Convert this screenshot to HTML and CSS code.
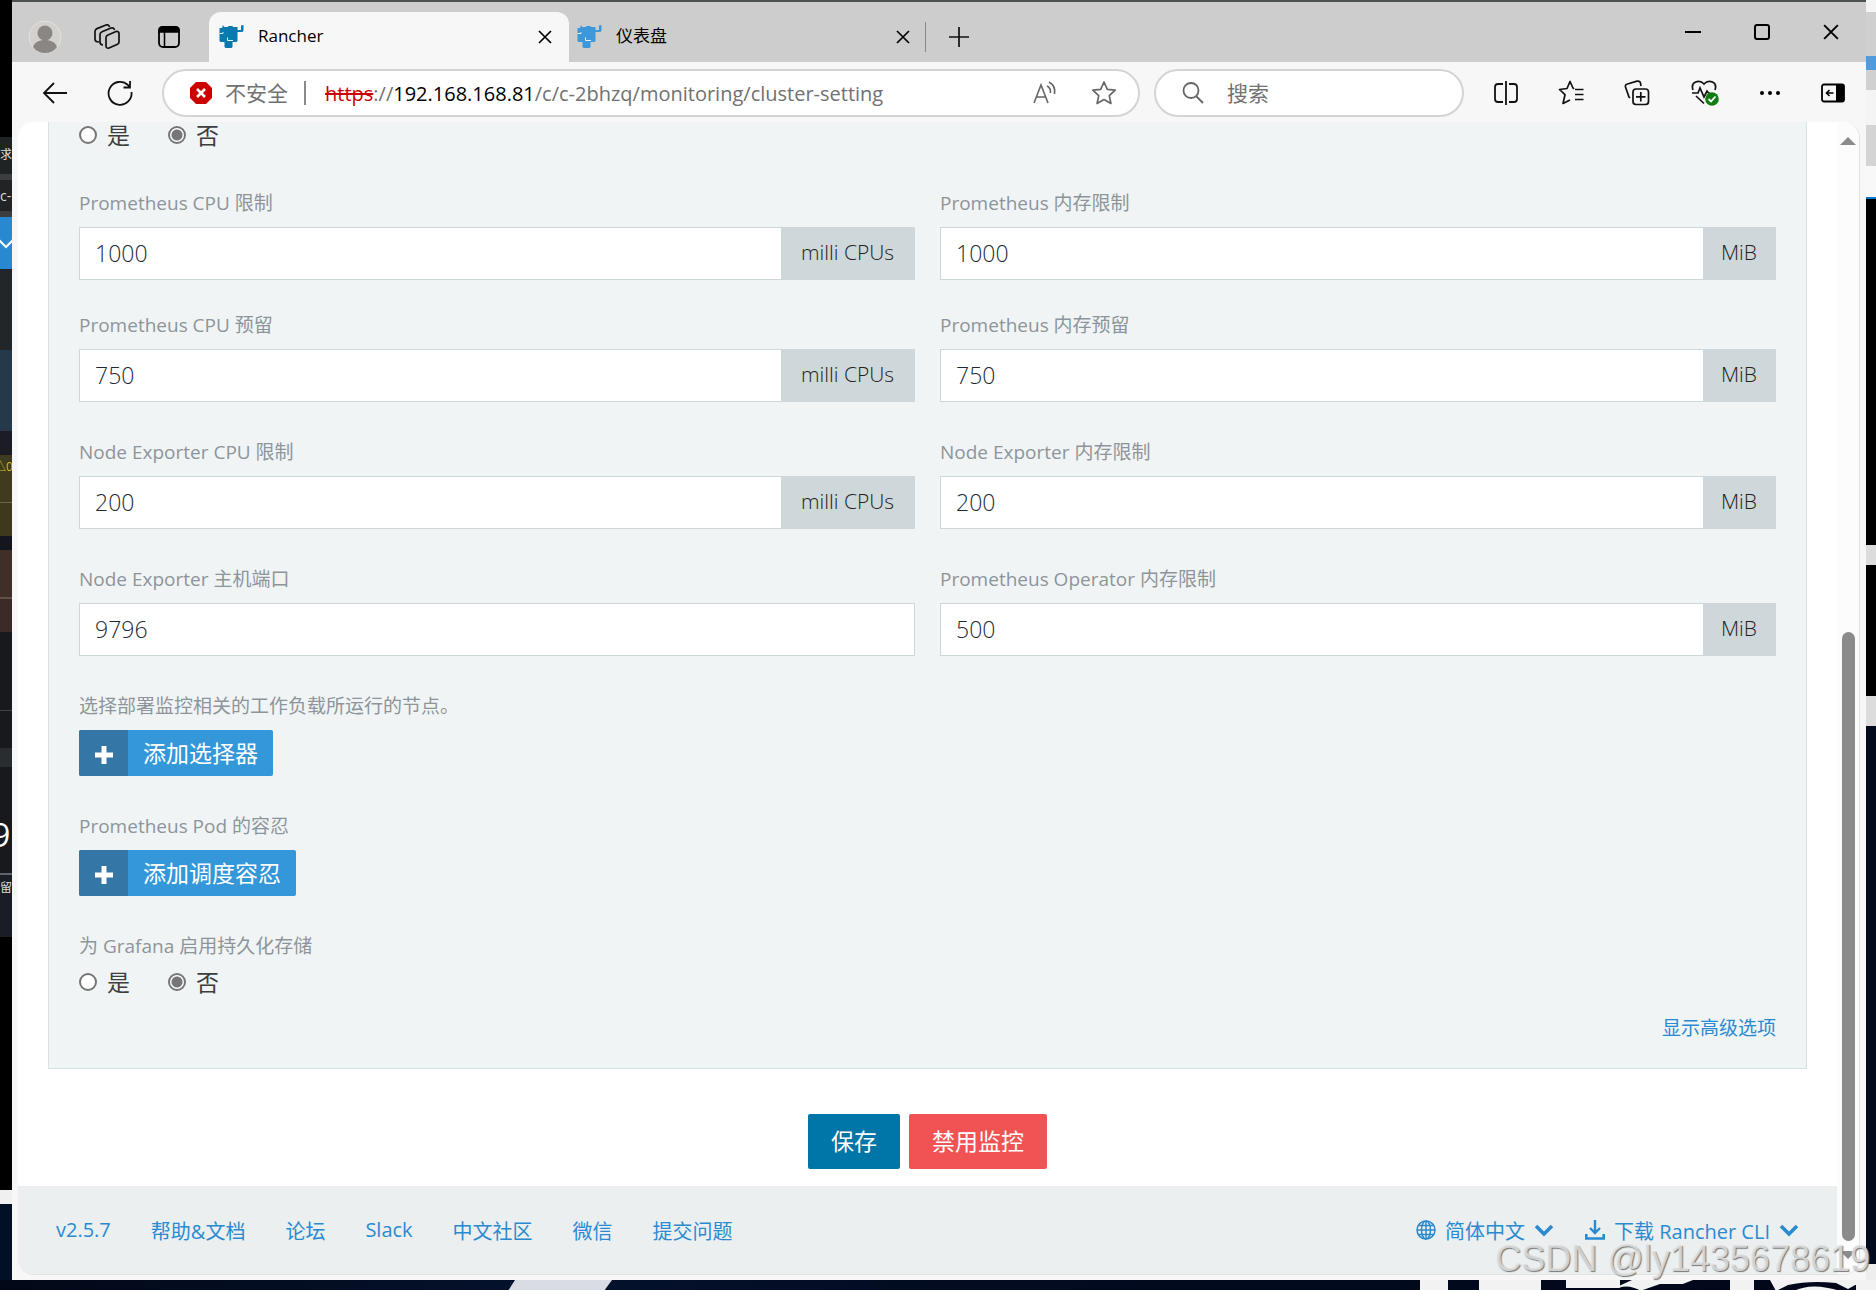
FILE: index.html
```html
<!DOCTYPE html>
<html lang="zh-CN">
<head>
<meta charset="utf-8">
<title>Rancher</title>
<link rel="stylesheet" href="styles.css">
</head>
<body>
<svg class="defs" aria-hidden="true">
  <symbol id="bull" viewBox="0 0 24 24">
    <path fill="currentColor" d="M0 3h2.500L3.500 0l1 2h4L9 1h4l.5 1H18v3h3.500V.5L24 0v5.500L23 7h-5v9l-1 1h-4v5l-1 1H6l-1-1v-5H1l-1-1z"/>
    <path d="M0 8.500h3.500V7M8 12.500v3h5.500" fill="none" stroke="#e8eef2" stroke-width="1"/>
  </symbol>
  <symbol id="close" viewBox="0 0 14 14"><path d="M1 1l12 12M13 1L1 13" fill="none" stroke="currentColor" stroke-width="1.700"/></symbol>
  <symbol id="chev" viewBox="0 0 20 14"><path d="M2 3l8 8 8-8" fill="none" stroke="currentColor" stroke-width="3.600"/></symbol>
  <symbol id="plus" viewBox="0 0 18 18"><path d="M0 9h18M9 0v18" fill="none" stroke="currentColor" stroke-width="5"/></symbol>
</svg>
<div class="desktop">
  <div class="strip-left" aria-hidden="true">
    <span class="l-text l-a">求特</span><span class="l-text l-b">c-</span>
    <svg class="l-chev" viewBox="0 0 12 14"><path d="M-1 3l7 7 7-7" fill="none" stroke="#fff" stroke-width="2"/></svg>
    <span class="l-text l-c">&#9651;0</span><span class="l-text l-d">9</span><span class="l-text l-e">留</span>
  </div>
  <div class="window">
    <header class="tabs">
      <div class="tab-tools">
        <button class="icon-btn" aria-label="个人资料"><svg width="34" height="34" viewBox="0 0 34 34"><circle cx="17" cy="17" r="16" fill="#d3d1ce" stroke="#e4e2df"/><circle cx="17" cy="13" r="7.500" fill="#8a8683"/><path d="M5 27c2-5 6-7 12-7s10 2 12 7c-3 4-7 6-12 6s-9-2-12-6z" fill="#8a8683"/></svg></button>
        <button class="icon-btn" aria-label="工作区"><svg width="26" height="26" viewBox="0 0 26 26" fill="none" stroke="#111" stroke-width="1.700"><path d="M14 11l8-3.500c1.500-.5 3 .5 3 2V18c0 1-.5 1.700-1.500 2.200L15 24c-1.500.7-3-.3-3-2v-8.500c0-1 .8-2 2-2.500zM9 21c-2 0-3-1-3-3V10.500c0-1.500.6-2.200 2-2.800L17 4c1.500-.5 3 0 3.500 2M5 18c-2.500 0-4-1-4-3V7.500C1 6 1.600 5.200 3 4.600L12 1c1.500-.5 3 0 3.500 2"/></svg></button>
        <button class="icon-btn" aria-label="标签页操作"><svg width="24" height="24" viewBox="0 0 24 24"><rect x="2" y="2" width="20" height="20" rx="4" fill="none" stroke="#000" stroke-width="1.800"/><path d="M2 7V5q0-3 3-3h14q3 0 3 3v2zM7.500 7v15" stroke="#000" stroke-width="1.500"/></svg></button>
      </div>
      <div class="tab tab-active">
        <svg class="fav" width="25" height="24"><use href="#bull"/></svg><span class="tab-title">Rancher</span>
        <button class="icon-btn" aria-label="关闭标签页"><svg width="14" height="14"><use href="#close"/></svg></button>
      </div>
      <div class="tab tab-idle">
        <svg class="fav fav-light" width="25" height="24"><use href="#bull"/></svg><span class="tab-title">仪表盘</span>
        <button class="icon-btn" aria-label="关闭标签页"><svg width="14" height="14"><use href="#close"/></svg></button>
      </div>
      <button class="icon-btn new-tab" aria-label="新建标签页"><svg width="22" height="22" viewBox="0 0 22 22"><path d="M1 11h20M11 1v20" stroke="#111" stroke-width="1.700"/></svg></button>
      <div class="win-controls">
        <button class="icon-btn" aria-label="最小化"><svg width="16" height="16" viewBox="0 0 16 16"><path d="M0 8h16" stroke="#000" stroke-width="2"/></svg></button>
        <button class="icon-btn" aria-label="最大化"><svg width="16" height="16" viewBox="0 0 16 16"><rect x="1" y="1" width="14" height="14" rx="2" fill="none" stroke="#000" stroke-width="2"/></svg></button>
        <button class="icon-btn" aria-label="关闭"><svg width="16" height="16"><use href="#close"/></svg></button>
      </div>
    </header>
    <nav class="toolbar">
      <div class="nav-buttons">
        <button class="icon-btn" aria-label="返回"><svg width="26" height="24" viewBox="0 0 26 24" fill="none" stroke="#111" stroke-width="1.800"><path d="M25 12H2M12 2L2 12l10 10"/></svg></button>
        <button class="icon-btn" aria-label="刷新"><svg width="26" height="26" viewBox="0 0 26 26" fill="none" stroke="#111" stroke-width="1.800"><path d="M24.500 12A11.500 11.500 0 1 1 21 5l2 2.500M23 1v6.500h-6.500"/></svg></button>
      </div>
      <div class="address">
        <svg width="24" height="24" viewBox="0 0 24 24"><path d="M7 1h10l6 6v10l-6 6H7l-6-6V7z" fill="#c00"/><path d="M8 8l8 8M16 8l-8 8" stroke="#fff" stroke-width="2.600"/></svg>
        <span class="unsafe">不安全</span>
        <span class="url"><s>https</s>://<b>192.168.168.81</b>/c/c-2bhzq/monitoring/cluster-setting</span>
        <button class="icon-btn" aria-label="朗读"><svg width="26" height="24" viewBox="0 0 26 24" fill="none" stroke="#666" stroke-width="1.600"><path d="M2 22L9 4l7 18M4.500 16h9M15 5q4 2 3.500 7M17 1q7 4 5.500 12"/></svg></button>
        <button class="icon-btn" aria-label="收藏"><svg width="26" height="26" viewBox="0 0 26 26" fill="none" stroke="#666" stroke-width="1.700" stroke-linejoin="round"><path d="M13 2l3.300 7.300 7.900.9-5.900 5.400 1.600 7.900-6.900-4-6.900 4 1.600-7.900L1.800 10.200l7.900-.9z"/></svg></button>
      </div>
      <div class="search">
        <svg width="24" height="24" viewBox="0 0 24 24" fill="none" stroke="#666" stroke-width="1.800"><circle cx="10" cy="9.500" r="7.500"/><path d="M15 15l7 7"/></svg>
        <input type="text" placeholder="搜索" aria-label="搜索">
      </div>
      <div class="actions">
        <button class="icon-btn" aria-label="分屏"><svg width="24" height="24" viewBox="0 0 24 24" fill="none" stroke="#111" stroke-width="1.800"><path d="M12 0v24M9 3H4q-3 0-3 3v12q0 3 3 3h5M15 3h5q3 0 3 3v12q0 3-3 3h-5"/></svg></button>
        <button class="icon-btn" aria-label="收藏夹"><svg width="26" height="26" viewBox="0 0 26 26" fill="none" stroke="#111" stroke-width="1.700" stroke-linejoin="round"><path d="M16 9l-1-1-3-6.500-3 7-7.500 1 5.500 5.200L5 23.500 12 20M17 9.500h8.500M17 14.500h8.500M17 19.500h8.500"/></svg></button>
        <button class="icon-btn" aria-label="集锦"><svg width="26" height="26" viewBox="0 0 26 26" fill="none" stroke="#111" stroke-width="1.700"><rect x="9" y="9" width="15.500" height="15.500" rx="3"/><path d="M16.800 12v9.500M12 16.800h9.500M6 18l-1-1-3.500-10Q1 4.500 3.500 4L13 1.200q3-.5 3.500 2L17 6"/></svg></button>
        <button class="icon-btn" aria-label="浏览器概要"><svg width="28" height="26" viewBox="0 0 28 26" fill="none" stroke="#111" stroke-width="1.700"><path d="M2 10Q0 4 4.500 2q5-2 8.500 2 3.500-4 8.500-2Q26 4 24 10M1 13h6l2-5 4 9 3-6 1.500 2H19M5 16l8 7.500"/><circle cx="21" cy="19" r="6.800" fill="#107c10" stroke="none"/><path d="M17.500 19l2.500 2.500 4.500-5" stroke="#fff" stroke-width="1.800"/></svg></button>
        <button class="icon-btn" aria-label="更多"><svg width="22" height="6" viewBox="0 0 22 6"><circle cx="3" cy="3" r="2"/><circle cx="11" cy="3" r="2"/><circle cx="19" cy="3" r="2"/></svg></button>
        <button class="icon-btn" aria-label="侧边栏"><svg width="24" height="20" viewBox="0 0 24 20"><rect x="1" y="1.500" width="22" height="17" rx="2" fill="none" stroke="#000" stroke-width="1.800"/><path d="M15 1h7q1 0 1 1v16q0 1-1 1h-7z"/><path d="M12.500 10H6M8.500 7L5.500 10l3 3" fill="none" stroke="#000" stroke-width="1.600"/></svg></button>
      </div>
    </nav>
    <div class="viewport">
      <div class="page">
        <main>
          <form class="panel">
            <div class="radios">
              <label><input type="radio" name="persist-prometheus">是</label>
              <label><input type="radio" name="persist-prometheus" checked>否</label>
            </div>
            <div class="fields tight">
              <div class="field"><label for="f1">Prometheus CPU 限制</label><div class="group"><input id="f1" type="text" value="1000"><span class="unit unit-wide">milli CPUs</span></div></div>
              <div class="field"><label for="f2">Prometheus 内存限制</label><div class="group"><input id="f2" type="text" value="1000"><span class="unit">MiB</span></div></div>
              <div class="field"><label for="f3">Prometheus CPU 预留</label><div class="group"><input id="f3" type="text" value="750"><span class="unit unit-wide">milli CPUs</span></div></div>
              <div class="field"><label for="f4">Prometheus 内存预留</label><div class="group"><input id="f4" type="text" value="750"><span class="unit">MiB</span></div></div>
            </div>
            <div class="fields">
              <div class="field"><label for="f5">Node Exporter CPU 限制</label><div class="group"><input id="f5" type="text" value="200"><span class="unit unit-wide">milli CPUs</span></div></div>
              <div class="field"><label for="f6">Node Exporter 内存限制</label><div class="group"><input id="f6" type="text" value="200"><span class="unit">MiB</span></div></div>
              <div class="field"><label for="f7">Node Exporter 主机端口</label><div class="group"><input id="f7" type="text" value="9796"></div></div>
              <div class="field"><label for="f8">Prometheus Operator 内存限制</label><div class="group"><input id="f8" type="text" value="500"><span class="unit">MiB</span></div></div>
            </div>
            <div class="field"><span class="label">选择部署监控相关的工作负载所运行的节点。</span>
              <button type="button" class="add"><span class="add-icon"><svg width="18" height="18"><use href="#plus"/></svg></span><span class="add-text">添加选择器</span></button></div>
            <div class="field"><span class="label">Prometheus Pod 的容忍</span>
              <button type="button" class="add"><span class="add-icon"><svg width="18" height="18"><use href="#plus"/></svg></span><span class="add-text">添加调度容忍</span></button></div>
            <div class="field"><span class="label">为 Grafana 启用持久化存储</span>
              <div class="radios">
                <label><input type="radio" name="persist-grafana">是</label>
                <label><input type="radio" name="persist-grafana" checked>否</label>
              </div></div>
            <a class="advanced" href="#">显示高级选项</a>
          </form>
          <div class="submit">
            <button class="btn save">保存</button>
            <button class="btn danger">禁用监控</button>
          </div>
        </main>
        <footer>
          <div class="links">
            <a href="#">v2.5.7</a><a href="#">帮助&amp;文档</a><a href="#">论坛</a><a href="#">Slack</a><a href="#">中文社区</a><a href="#">微信</a><a href="#">提交问题</a>
          </div>
          <div class="menus">
            <button class="menu"><svg width="20" height="20" viewBox="0 0 20 20" fill="none" stroke="currentColor" stroke-width="1.500"><circle cx="10" cy="10" r="9"/><ellipse cx="10" cy="10" rx="4.500" ry="9"/><path d="M10 1v18M1 10h18M2.500 5.500h15M2.500 14.500h15"/></svg>简体中文<svg width="20" height="14"><use href="#chev"/></svg></button>
            <button class="menu"><svg width="20" height="20" viewBox="0 0 20 20" fill="none" stroke="currentColor" stroke-width="2.600"><path d="M10 0v12M5 8l5 5 5-5" stroke-width="2.400"/><path d="M1.300 14v4.500h17.400V14"/></svg>下载 Rancher CLI<svg width="20" height="14"><use href="#chev"/></svg></button>
          </div>
        </footer>
      </div>
      <div class="scrollbar" aria-hidden="true">
        <svg width="16" height="8" viewBox="0 0 16 8"><path d="M0 8l8-8 8 8z" fill="#8b8b8b"/></svg>
        <div class="track"><div class="thumb"></div></div>
        <svg width="16" height="8" viewBox="0 0 16 8"><path d="M0 0l8 8 8-8z" fill="#8b8b8b"/></svg>
      </div>
    </div>
  </div>
  <div class="strip-right" aria-hidden="true"></div>
  <svg class="strip-bottom" height="11" aria-hidden="true">
    <path d="M508 11l7-11h97l-8 11z" fill="#d9dce2"/>
    <svg x="100%" width="456" height="11" overflow="visible"><g transform="translate(-456 0)">
      <path fill="#f2f2f2" d="M0 0h28v11H0zM59 0h62v11H59zM146 0h54v11h-54zM212 0h61l-28 11h-24q-15-9-29 0h-4zM310 0h24v11h-24zM350 0h94l-16 9-12-6q-26-3-48 2l-12 6zM374 11q18-9 46 0zM436 0h20v11h-20z"/>
      <path fill="#02081a" d="M146 8h54v3h-54zM240 4h30v7h-50z"/></g></svg>
  </svg>
  <div class="watermark">CSDN @ly1435678619</div>
</div>
</body>
</html>
```

FILE: styles.css
```css
* { box-sizing: border-box; }
body {
  margin: 0;
  font-family: "Open Sans", "Noto Sans CJK SC", sans-serif;
  font-size: 23px;
  color: #3d3d3d;
}
button, input { font: inherit; color: inherit; }
button { border: 0; padding: 0; background: none; cursor: pointer; }
a { color: #2a8ad0; text-decoration: none; }
svg { display: block; flex: none; }
.defs { position: absolute; width: 0; height: 0; }

.desktop {
  position: relative;
  display: grid;
  grid-template-columns: 12px 1fr 10px;
  grid-template-rows: 1fr 11px;
  min-height: 100vh;
  background: #02081a;
  overflow: hidden;
}
.strip-left {
  position: relative;
  overflow: hidden;
  background: linear-gradient(#000 137px, #202323 137px 174px, #3c3d3f 174px 180px, #222324 180px 211px, #3c3d3f 211px 217px, #2889d0 217px 269px, #222629 269px 350px, #24394a 350px 431px, #1b1c24 431px 455px, #3f3b1e 455px 502px, #6b6748 502px 503px, #3d391c 503px 536px, #14151d 536px 550px, #3f2f28 550px 597px, #655048 597px 599px, #3a2b27 599px 632px, #17191d 632px 710px, #40434a 710px 711px, #17191d 711px 748px, #2a2d2f 748px 767px, #17191d 767px 873px, #60646a 873px 875px, #1a1e24 875px 937px, #000 937px 1190px, #f0f0f0 1190px 1204px, #021026 1204px);
}
.l-text { position: absolute; left: 0; font-size: 12px; line-height: 16px; color: #ddd; white-space: nowrap; }
.l-a { top: 147px; }
.l-b { top: 188px; font-size: 14px; }
.l-c { top: 459px; left: -6px; color: #d2bd2c; }
.l-d { top: 817px; left: -8px; font-size: 32px; line-height: 36px; color: #fff; }
.l-e { top: 880px; }
.l-chev { position: absolute; top: 237px; left: 0; width: 12px; }
.strip-right {
  background: linear-gradient(#f4f4f4 12px, #d0d0d0 12px 56px, #4f9be0 56px 70px, #d0d0d0 70px 90px, #f4f4f4 90px 125px, #d4d4d4 125px 166px, #f8f8f8 166px 197px, #0078d4 197px 199px, #000 199px 545px, #dcdcdc 545px 565px, #000 565px 696px, #dcdcdc 696px 726px, #020a1e 726px 1264px, #eee 1264px);
}
.strip-bottom { grid-column: 1 / -1; width: 100%; background: linear-gradient(90deg, #020817, #04122c 30%, #020b20 50%, #02081a); }

.window {
  display: flex;
  flex-direction: column;
  min-width: 0;
  background: #f7f7f7;
  border-top: 2px solid #4e524e;
}
.icon-btn { display: flex; align-items: center; justify-content: center; }
.tabs {
  display: flex;
  height: 60px;
  background: #cdcdcd;
  font-size: 17px;
  color: #000;
}
.tab-tools { display: flex; align-items: center; width: 197px; padding: 10px 0 0 2px; }
.tab-tools .icon-btn { width: 62px; }
.tab { display: flex; align-items: center; width: 360px; margin-top: 10px; }
.tab-active { padding: 0 17px 0 10px; background: #f7f7f7; border-radius: 12px 12px 0 0; }
.tab-idle { width: 357px; margin: 20px 0 10px; padding: 0 15px 0 8px; border-right: 1px solid #888; }
.tab .fav { color: #0878b0; }
.tab .fav-light { color: #3c98da; }
.tab-title { flex: 1; padding: 0 0 2px 14px; line-height: 24px; }
.new-tab { margin: 10px 22px 0; }
.win-controls { display: flex; gap: 53px; margin-left: auto; padding-right: 27px; }

.toolbar { display: flex; align-items: center; height: 60px; padding: 2px 21px 0 30px; gap: 14px; }
.nav-buttons { display: flex; gap: 39px; width: 106px; }
.address, .search { display: flex; align-items: center; height: 48px; border: 2px solid #d4d4d4; border-radius: 24px; background: #fff; font-size: 20px; color: #717171; }
.address { flex: 1; padding: 0 21px 0 25px; }
.address .icon-btn { margin-left: 33px; }
.unsafe { margin-left: 12px; padding-right: 16px; border-right: 2px solid #8a8a8a; line-height: 24px; font-size: 21px; white-space: nowrap; }
.url { flex: 1; margin-left: 19px; white-space: nowrap; }
.url b { font-weight: 400; color: #000; }
.url s { color: #c00; }
.search { width: 310px; padding: 0 20px 0 25px; gap: 20px; font-size: 21px; }
.search input { flex: 1; min-width: 0; border: 0; outline: 0; background: none; }
.search input::placeholder { color: #717171; opacity: 1; }
.actions { display: flex; justify-content: space-between; width: 351px; margin-left: 16px; }

.viewport {
  flex: 1;
  display: flex;
  margin: 0 6px 5px;
  border: 1px solid #e2e2e2;
  border-width: 0 1px 1px 0;
  border-radius: 16px;
  overflow: hidden;
  background: #fff;
}
.page { flex: 1; min-width: 0; display: flex; flex-direction: column; }
main { flex: 1; }
.panel {
  display: flex;
  flex-direction: column;
  gap: 38px;
  margin: 0 30px;
  padding: 1px 30px 28px;
  background: #f0f4f5;
  border: 1px solid #d7e2e3;
  border-top: 0;
}
.panel > .radios { margin-bottom: 6px; }
.radios { display: flex; gap: 38px; line-height: 24px; }
.radios label { display: flex; align-items: center; gap: 10px; }
.radios input {
  appearance: none;
  width: 18px;
  height: 18px;
  margin: 0;
  border: 2px solid #767676;
  border-radius: 50%;
  background: #fff;
}
.radios input:checked { background: radial-gradient(#767676 5px, #fff 6px); }
.fields { display: grid; grid-template-columns: 1fr 1fr; gap: 38px 25px; }
.fields.tight { row-gap: 33px; }
.field { display: flex; flex-direction: column; gap: 12px; min-width: 0; }
.field > label, .label { font-size: 19px; line-height: 24px; color: #8d959b; }
.group { display: flex; height: 53px; background: #fff; border: 1px solid #ced7da; }
.group input { flex: 1; min-width: 0; padding: 0 15px 2px; border: 0; outline: 0; background: none; font-weight: 300; color: #1e2a35; }
.unit { display: flex; align-items: center; justify-content: center; width: 72px; padding-bottom: 3px; background: #ced7da; font-size: 21px; font-weight: 300; color: #222; }
.unit-wide { width: 133px; }
.add { display: flex; align-self: flex-start; height: 46px; border-radius: 2px; overflow: hidden; background: #3497da; color: #fff; }
.add-icon { display: flex; align-items: center; justify-content: center; width: 49px; height: 100%; padding-top: 4px; background: #3477a7; }
.add-text { align-self: center; padding: 0 15px 3px; }
.advanced { align-self: flex-end; margin-top: -16px; font-size: 19px; line-height: 24px; }
.submit { display: flex; justify-content: center; gap: 9px; padding: 45px 0 17px; }
.btn { height: 55px; padding: 0 23px 4px; border-radius: 2px; color: #fff; }
.save { background: #0075a8; }
.danger { background: #f15354; }
footer { display: flex; justify-content: space-between; align-items: center; height: 88px; padding: 0 38px; background: #ebeff0; font-size: 20px; color: #2a8ad0; }
.links { display: flex; gap: 40px; }
.menus { display: flex; gap: 31px; }
.menu { display: flex; align-items: center; gap: 9px; }
.scrollbar { display: flex; flex-direction: column; align-items: center; gap: 8px; width: 22px; padding: 15px 0; background: #fcfcfc; }
.track { flex: 1; display: flex; flex-direction: column; justify-content: flex-end; padding-bottom: 2px; }
.thumb { width: 13px; height: 56%; border-radius: 7px; background: #8b8b8b; }
.watermark {
  position: absolute;
  right: 6px;
  bottom: 12px;
  font: 36px/40px "Liberation Sans", sans-serif;
  color: rgba(225, 225, 225, .85);
  text-shadow: 1px 1px 1px #777;
}
```
